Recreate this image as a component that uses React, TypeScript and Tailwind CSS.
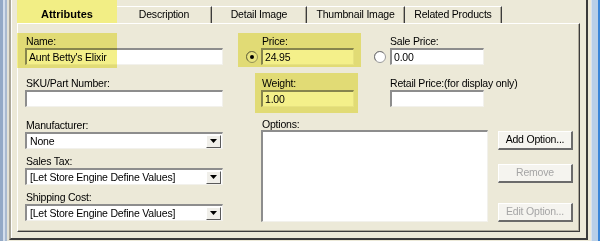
import React from 'react';

const font = { fontFamily: '"Liberation Sans", Arial, sans-serif' };

const Label = ({ children, className = '' }: { children: React.ReactNode; className?: string }) => (
  <div className={`h-[14px] leading-[14px] text-[10.5px] tracking-[-0.2px] text-black whitespace-nowrap ${className}`}>
    {children}
  </div>
);

const Input = ({ className, value = '' }: { className: string; value?: string }) => (
  <div
    className={`h-[17px] bg-white border-t-2 border-l-2 border-t-[#8d8d8d] border-l-[#8d8d8d] border-b border-r border-b-[#f2f1ec] border-r-[#f2f1ec] pl-[2px] text-[10.5px] tracking-[-0.2px] leading-[14px] text-black whitespace-nowrap overflow-hidden ${className}`}
  >
    {value}
  </div>
);

const Select = ({ value }: { value: string }) => (
  <div className="w-[198px] h-[17px] bg-white border-t-2 border-l-2 border-t-[#8d8d8d] border-l-[#8d8d8d] border-b border-r border-b-[#f2f1ec] border-r-[#f2f1ec] flex items-center">
    <div className="flex-1 pl-[3px] text-[10.5px] tracking-[-0.2px] leading-[13px] text-black whitespace-nowrap">{value}</div>
    <div className="w-[15px] h-[13px] mr-px bg-[#f0efea] border-t border-l border-t-white border-l-white border-b border-r border-b-[#5a5a5a] border-r-[#5a5a5a] flex items-center justify-center">
      <svg width="7" height="4" viewBox="0 0 7 4">
        <path d="M0 0h7L3.5 4z" fill="#000" />
      </svg>
    </div>
  </div>
);

const Radio = ({ checked }: { checked?: boolean }) => (
  <svg width="12" height="12" viewBox="0 0 12 12" className="shrink-0">
    <circle cx="6" cy="6" r="5.5" fill={checked ? '#f4f3ee' : '#ffffff'} stroke="#9a9a9a" />
    <path d="M2 9.5A5 5 0 0 1 9.5 2" fill="none" stroke="#7a7a7a" strokeWidth="1" />
    {checked && <circle cx="6" cy="6" r="2" fill="#000" />}
  </svg>
);

const Btn = ({ children, disabled }: { children: React.ReactNode; disabled?: boolean }) => (
  <div
    className={`w-[75px] h-[19px] bg-[#f5f4ef] border-t border-l border-t-white border-l-white border-b-2 border-r-2 border-b-[#6b6b6b] border-r-[#6b6b6b] flex items-center justify-center text-[10.5px] tracking-[-0.2px] ${
      disabled ? 'text-[#a5a5a5]' : 'text-black'
    }`}
  >
    {children}
  </div>
);

const Tab = ({ label, className }: { label: string; className: string }) => (
  <div
    className={`h-[17px] border-t border-t-white border-r border-r-[#3c3c3c] shadow-[inset_-1px_0_0_#aca899] flex items-center justify-center text-[10.5px] tracking-[-0.2px] text-black ${className}`}
  >
    {label}
  </div>
);

export default function App() {
  return (
    <div className="w-[600px] h-[241px] bg-[#ece9d8] flex overflow-hidden" style={font}>
      {/* left window frame */}
      <div className="w-[9px] h-full flex">
        <div className="w-[3px] bg-[#93a9c6]" />
        <div className="w-[2px] bg-[#d3deec]" />
        <div className="w-[2px] bg-[#a9bad0]" />
        <div className="w-[2px] bg-[#e3e2d6]" />
      </div>

      {/* group box */}
      <div className="w-[579px] h-[240px] border-l-2 border-l-[#aca899] border-r-2 border-r-[#3a3a3a] border-b-2 border-b-[#3a3a3a] shadow-[inset_1px_0_0_#ffffff] pl-[6px]">
        {/* tabs */}
        <div className="flex items-end h-[23px]">
          <div className="w-[100px] h-[23px] bg-[#f2ee85] flex items-center justify-center pt-[5px] text-[11px] font-bold text-black">
            Attributes
          </div>
          <Tab label="Description" className="w-[95px]" />
          <Tab label="Detail Image" className="w-[95px]" />
          <Tab label="Thumbnail Image" className="w-[98px]" />
          <Tab label="Related Products" className="w-[97px]" />
        </div>

        {/* panel */}
        <div className="relative w-[563px] h-[209px] border-t border-l border-t-white border-l-white border-r border-b border-r-[#3c3c3c] border-b-[#3c3c3c] shadow-[inset_-1px_-1px_0_#aca899] pl-[7px] pt-[10px]">
          {/* row 1 */}
          <div className="flex">
            <div className="w-[198px]">
              <Label className="pl-px">Name:</Label>
              <Input className="w-[198px]" value="Aunt Betty's Elixir" />
            </div>
            <div className="ml-[23px] w-[108px]">
              <Label className="pl-[16px]">Price:</Label>
              <div className="flex items-center">
                <Radio checked />
                <Input className="ml-[3px] w-[93px]" value="24.95" />
              </div>
            </div>
            <div className="ml-[20px] w-[110px]">
              <Label className="pl-[16px]">Sale Price:</Label>
              <div className="flex items-center">
                <Radio />
                <Input className="ml-[4px] w-[94px]" value="0.00" />
              </div>
            </div>
          </div>

          {/* row 2 */}
          <div className="flex mt-[11px]">
            <div className="w-[198px]">
              <Label className="pl-px">SKU/Part Number:</Label>
              <Input className="w-[198px]" />
            </div>
            <div className="ml-[23px] w-[108px]">
              <Label className="pl-[16px]">Weight:</Label>
              <Input className="ml-[15px] w-[93px]" value="1.00" />
            </div>
            <div className="ml-[20px] w-[130px]">
              <Label className="pl-[16px]">Retail Price:(for display only)</Label>
              <Input className="ml-[16px] w-[94px]" />
            </div>
          </div>

          {/* bottom section */}
          <div className="flex mt-[11px]">
            <div className="w-[198px]">
              <Label className="pl-px">Manufacturer:</Label>
              <Select value="None" />
              <Label className="pl-px mt-[5px]">Sales Tax:</Label>
              <Select value="[Let Store Engine Define Values]" />
              <Label className="pl-px mt-[5px]">Shipping Cost:</Label>
              <Select value="[Let Store Engine Define Values]" />
            </div>
            <div className="ml-[38px] w-[227px]">
              <div className="h-[12px] leading-[12px] pl-px text-[10.5px] tracking-[-0.2px] text-black">Options:</div>
              <div className="h-[92px] bg-white border-t-2 border-l-2 border-t-[#8d8d8d] border-l-[#8d8d8d] border-b border-r border-b-[#f2f1ec] border-r-[#f2f1ec]" />
            </div>
            <div className="ml-[10px] flex flex-col">
              <div className="mt-[13px]">
                <Btn>Add Option...</Btn>
              </div>
              <div className="mt-[14px]">
                <Btn disabled>Remove</Btn>
              </div>
              <div className="mt-[20px]">
                <Btn disabled>Edit Option...</Btn>
              </div>
            </div>
          </div>

          {/* highlight overlays */}
          <div className="absolute left-[-1px] top-[9px] w-[100px] h-[35px] bg-[#f4f08a] mix-blend-multiply pointer-events-none" />
          <div className="absolute left-[220px] top-[9px] w-[123px] h-[34px] bg-[#f4f08a] mix-blend-multiply pointer-events-none" />
          <div className="absolute left-[237px] top-[49px] w-[103px] h-[40px] bg-[#f4f08a] mix-blend-multiply pointer-events-none" />
        </div>
      </div>

      <div className="w-[3px]" />

      {/* right window frame */}
      <div className="w-[9px] h-full flex">
        <div className="w-[1px] bg-[#d9e3ee]" />
        <div className="w-[6px] bg-[#b8cfe8]" />
        <div className="w-[2px] bg-[#3a86d8]" />
      </div>
    </div>
  );
}
